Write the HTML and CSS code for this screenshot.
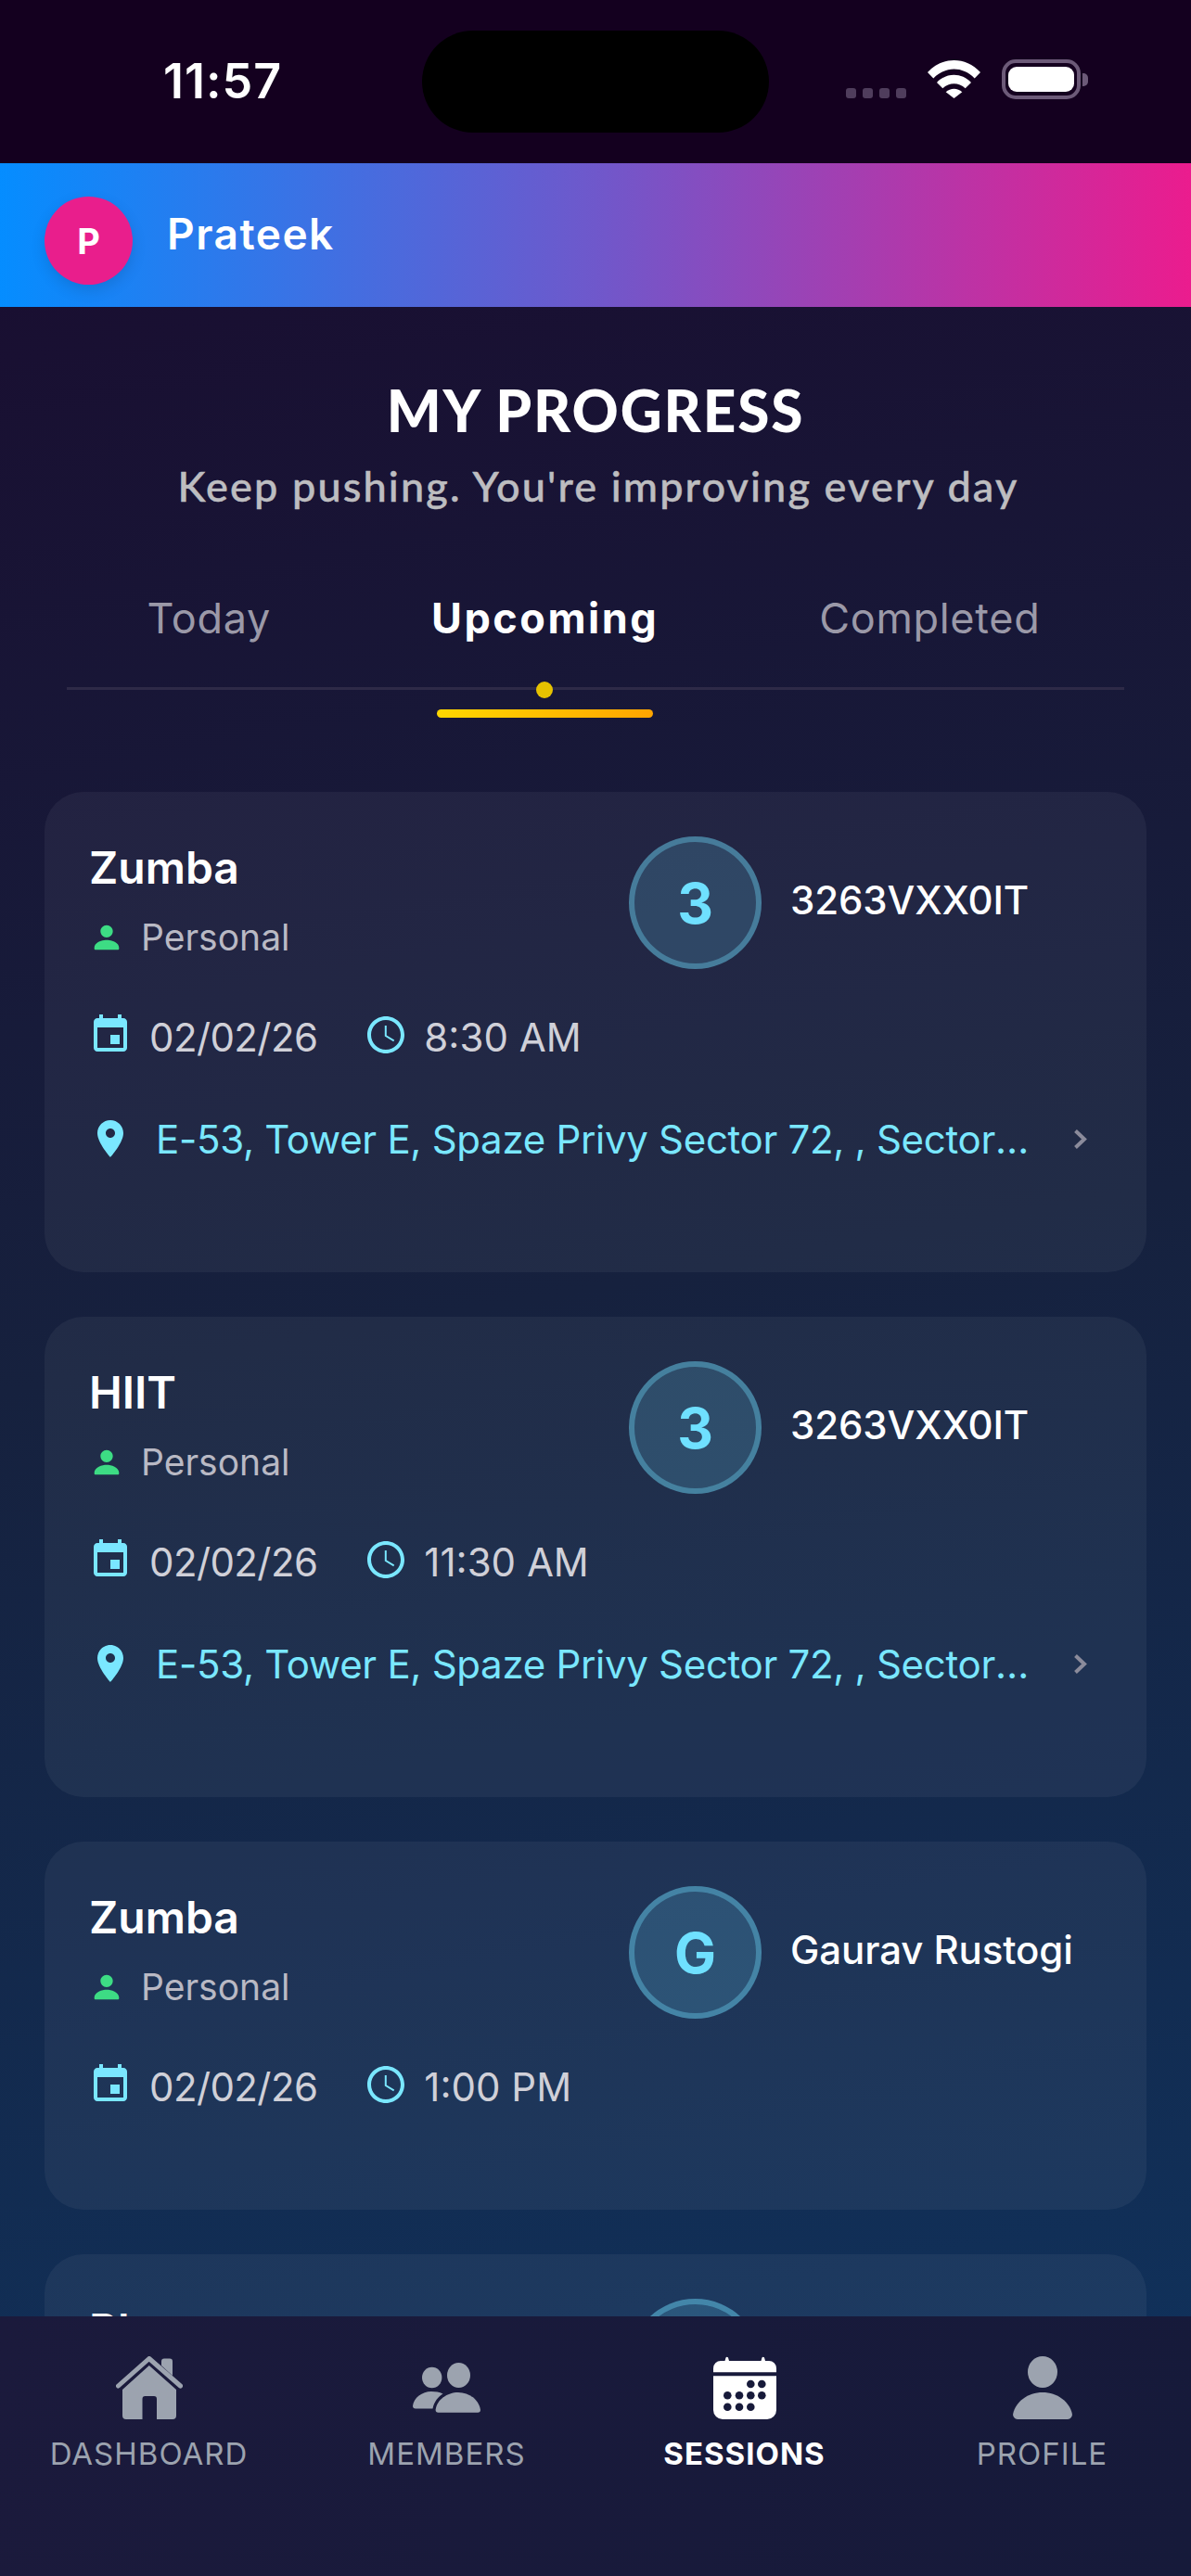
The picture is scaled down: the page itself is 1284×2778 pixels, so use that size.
FILE: index.html
```html
<!DOCTYPE html>
<html lang="en">
<head>
<meta charset="utf-8">
<title>My Progress</title>
<link rel="stylesheet" href="styles.css">
</head>
<body>
<div class="app">
  <div class="status">
    <div class="status__time">11:57</div>
    <div class="status__island"></div>
    <div class="status__icons">
      <div class="signal"><i></i><i></i><i></i><i></i></div>
      <svg class="wifi" width="57" height="41" viewBox="0 0 57 41"><path fill="#fff" d="M0 13C16-4.300 41-4.300 57 13l-6.300 6.400C37.500 6.200 19.500 6.200 6.300 19.400Z"/><path fill="#fff" d="M10 24C20 13 37 13 47 24l-6.300 6.200C33.500 23.500 23.500 23.500 16.300 30.200Z"/><path fill="#fff" d="M19.700 34.300C24.500 29.600 32.500 29.600 37.300 34.300L28.500 41Z"/></svg>
      <div class="battery"><div class="battery__fill"></div></div>
      <div class="battery__nub"></div>
    </div>
  </div>
  <header class="header">
    <div class="header__avatar">P</div>
    <div class="header__name">Prateek</div>
  </header>
  <main class="main">
    <h1 class="main__title">MY PROGRESS</h1>
    <p class="main__sub">Keep pushing. You're improving every day</p>
    <nav class="tabs">
      <div class="tab">Today</div>
      <div class="tab tab--active">Upcoming<span class="tab__dot"></span><span class="tab__bar"></span></div>
      <div class="tab">Completed</div>
    </nav>
    <section class="cards">

      <article class="card">
        <div class="card__top">
          <div class="card__left">
            <div class="card__title">Zumba</div>
            <div class="card__type">
              <svg class="ico-person" width="40" height="40" viewBox="0 0 24 24"><path fill="#3ddc84" d="M12 12c2.210 0 4-1.790 4-4s-1.790-4-4-4-4 1.790-4 4 1.790 4 4 4zm0 1.600c-2.900 0-8 1.400-8 5.200v.4c0 .5.400.8.800.8h14.400c.4 0 .8-.3.800-.8v-.4c0-3.800-5.100-5.200-8-5.200z"/></svg>
              <span>Personal</span>
            </div>
          </div>
          <div class="trainer">
            <div class="trainer__circle">3</div>
            <div class="trainer__name">3263VXX0IT</div>
          </div>
        </div>
        <div class="card__when">
          <svg class="ico" viewBox="0 0 24 24"><path d="M17 12h-5v5h5v-5zM16 1v2H8V1H6v2H5c-1.110 0-1.990.900-1.990 2L3 19c0 1.100.890 2 2 2h14c1.100 0 2-.900 2-2V5c0-1.100-.900-2-2-2h-1V1h-2zm3 18H5V8h14v11z"/></svg>
          <span class="card__date">02/02/26</span>
          <svg class="ico ico--clock" viewBox="0 0 24 24"><path d="M11.990 2C6.470 2 2 6.480 2 12s4.470 10 9.990 10C17.520 22 22 17.520 22 12S17.520 2 11.990 2zM12 20c-4.420 0-8-3.580-8-8s3.580-8 8-8 8 3.580 8 8-3.580 8-8 8z"/><path d="M12.400 7h-1v5.700l4.700 2.900.5-.8-4.200-2.600z"/></svg>
          <span class="card__time">8:30 AM</span>
        </div>
        <div class="card__where">
          <svg class="ico" viewBox="0 0 24 24"><path d="M12 2C8.130 2 5 5.130 5 9c0 5.250 7 13 7 13s7-7.750 7-13c0-3.870-3.130-7-7-7zm0 9.500c-1.380 0-2.500-1.120-2.500-2.500s1.120-2.500 2.500-2.500 2.500 1.120 2.500 2.500-1.120 2.500-2.500 2.500z"/></svg>
          <span class="card__addr">E-53, Tower E, Spaze Privy Sector 72, , Sector 72, Gurugram</span>
          <svg class="chev" width="15" height="23" viewBox="0 0 15 23"><path d="M2.500 2.500 12 11.500 2.500 20.500" fill="none" stroke="#8b8b9b" stroke-width="4"/></svg>
        </div>
      </article>

      <article class="card">
        <div class="card__top">
          <div class="card__left">
            <div class="card__title">HIIT</div>
            <div class="card__type">
              <svg class="ico-person" width="40" height="40" viewBox="0 0 24 24"><path fill="#3ddc84" d="M12 12c2.210 0 4-1.790 4-4s-1.790-4-4-4-4 1.790-4 4 1.790 4 4 4zm0 1.600c-2.900 0-8 1.400-8 5.200v.4c0 .5.400.8.800.8h14.400c.4 0 .8-.3.800-.8v-.4c0-3.800-5.100-5.200-8-5.200z"/></svg>
              <span>Personal</span>
            </div>
          </div>
          <div class="trainer">
            <div class="trainer__circle">3</div>
            <div class="trainer__name">3263VXX0IT</div>
          </div>
        </div>
        <div class="card__when">
          <svg class="ico" viewBox="0 0 24 24"><path d="M17 12h-5v5h5v-5zM16 1v2H8V1H6v2H5c-1.110 0-1.990.900-1.990 2L3 19c0 1.100.890 2 2 2h14c1.100 0 2-.900 2-2V5c0-1.100-.900-2-2-2h-1V1h-2zm3 18H5V8h14v11z"/></svg>
          <span class="card__date">02/02/26</span>
          <svg class="ico ico--clock" viewBox="0 0 24 24"><path d="M11.990 2C6.470 2 2 6.480 2 12s4.470 10 9.990 10C17.520 22 22 17.520 22 12S17.520 2 11.990 2zM12 20c-4.420 0-8-3.580-8-8s3.580-8 8-8 8 3.580 8 8-3.580 8-8 8z"/><path d="M12.400 7h-1v5.700l4.700 2.900.5-.8-4.200-2.600z"/></svg>
          <span class="card__time">11:30 AM</span>
        </div>
        <div class="card__where">
          <svg class="ico" viewBox="0 0 24 24"><path d="M12 2C8.130 2 5 5.130 5 9c0 5.250 7 13 7 13s7-7.750 7-13c0-3.870-3.130-7-7-7zm0 9.500c-1.380 0-2.500-1.120-2.500-2.500s1.120-2.500 2.500-2.500 2.500 1.120 2.500 2.500-1.120 2.500-2.500 2.500z"/></svg>
          <span class="card__addr">E-53, Tower E, Spaze Privy Sector 72, , Sector 72, Gurugram</span>
          <svg class="chev" width="15" height="23" viewBox="0 0 15 23"><path d="M2.500 2.500 12 11.500 2.500 20.500" fill="none" stroke="#8b8b9b" stroke-width="4"/></svg>
        </div>
      </article>

      <article class="card">
        <div class="card__top">
          <div class="card__left">
            <div class="card__title">Zumba</div>
            <div class="card__type">
              <svg class="ico-person" width="40" height="40" viewBox="0 0 24 24"><path fill="#3ddc84" d="M12 12c2.210 0 4-1.790 4-4s-1.790-4-4-4-4 1.790-4 4 1.790 4 4 4zm0 1.600c-2.900 0-8 1.400-8 5.200v.4c0 .5.400.8.800.8h14.400c.4 0 .8-.3.800-.8v-.4c0-3.800-5.100-5.200-8-5.200z"/></svg>
              <span>Personal</span>
            </div>
          </div>
          <div class="trainer">
            <div class="trainer__circle">G</div>
            <div class="trainer__name">Gaurav Rustogi</div>
          </div>
        </div>
        <div class="card__when">
          <svg class="ico" viewBox="0 0 24 24"><path d="M17 12h-5v5h5v-5zM16 1v2H8V1H6v2H5c-1.110 0-1.990.900-1.990 2L3 19c0 1.100.890 2 2 2h14c1.100 0 2-.900 2-2V5c0-1.100-.900-2-2-2h-1V1h-2zm3 18H5V8h14v11z"/></svg>
          <span class="card__date">02/02/26</span>
          <svg class="ico ico--clock" viewBox="0 0 24 24"><path d="M11.990 2C6.470 2 2 6.480 2 12s4.470 10 9.990 10C17.520 22 22 17.520 22 12S17.520 2 11.990 2zM12 20c-4.420 0-8-3.580-8-8s3.580-8 8-8 8 3.580 8 8-3.580 8-8 8z"/><path d="M12.400 7h-1v5.700l4.700 2.900.5-.8-4.200-2.600z"/></svg>
          <span class="card__time">1:00 PM</span>
        </div>
      </article>

      <article class="card">
        <div class="card__top">
          <div class="card__left">
            <div class="card__title">Plyo</div>
          </div>
          <div class="trainer">
            <div class="trainer__circle">G</div>
          </div>
        </div>
      </article>

    </section>
  </main>
  <footer class="tabbar">
    <div class="tabbar__item">
      <svg width="72" height="68" viewBox="0 0 72 68"><path d="M2.500 32 35.800 2.500 69.500 32" fill="none" stroke="#9ca3af" stroke-width="5" stroke-linecap="round" stroke-linejoin="round"/><path fill="#9ca3af" d="M49 5.500a3 3 0 0 1 3-3h6a3 3 0 0 1 3 3V21L49 10Z"/><path fill="#9ca3af" d="M35.800 10 65 36V64a4 4 0 0 1-4 4H44V46a3 3 0 0 0-3-3H31.500a3 3 0 0 0-3 3V68H11a4 4 0 0 1-4-4V36Z"/></svg>
      <span class="tabbar__label">DASHBOARD</span>
    </div>
    <div class="tabbar__item">
      <svg width="73" height="68" viewBox="0 0 73 68"><ellipse cx="49.500" cy="20.500" rx="12.500" ry="13.500" fill="#9ca3af"/><ellipse cx="20.700" cy="23" rx="10.700" ry="11.300" fill="#9ca3af"/><path fill="#9ca3af" d="M27.500 60.700H70a3 3 0 0 0 3-3C71 47 61 39 49 39S26 47 24.600 57.700a3 3 0 0 0 2.900 3Z"/><path fill="#9ca3af" d="M3 56.500H21.500C23 49 27.500 43.500 32.500 40.500 28.500 38.700 25 38 20 38 10 38 1 45 0 53.500A3 3 0 0 0 3 56.500Z"/></svg>
      <span class="tabbar__label">MEMBERS</span>
    </div>
    <div class="tabbar__item tabbar__item--active">
      <svg width="68" height="68" viewBox="0 0 68 68"><path fill="#fff" d="M0 17.300V13a8 8 0 0 1 8-8H12.500L13.500 1.500Q14.700 0 16 1.500L17 5H51.500L52.500 1.500Q53.700 0 55 1.500L56 5H60a8 8 0 0 1 8 8v4.300Z"/><path fill="#fff" d="M0 21.300H68V58a10 10 0 0 1-10 10H10A10 10 0 0 1 0 58Z"/><g fill="#171a3a"><circle cx="40.300" cy="30" r="4.300"/><circle cx="52.300" cy="30" r="4.300"/><circle cx="15.300" cy="42.300" r="4.300"/><circle cx="28" cy="42.300" r="4.300"/><circle cx="40.300" cy="42.300" r="4.300"/><circle cx="52.300" cy="42.300" r="4.300"/><circle cx="15.300" cy="54.700" r="4.300"/><circle cx="28" cy="54.700" r="4.300"/><circle cx="40.300" cy="54.700" r="4.300"/></g></svg>
      <span class="tabbar__label">SESSIONS</span>
    </div>
    <div class="tabbar__item">
      <svg width="64" height="68" viewBox="0 0 64 68"><ellipse cx="32" cy="17" rx="16" ry="17" fill="#9ca3af"/><path fill="#9ca3af" d="M5 68A5 5 0 0 1 .2 62C3 49 16 39 32 39S61 49 63.800 62A5 5 0 0 1 59 68Z"/></svg>
      <span class="tabbar__label">PROFILE</span>
    </div>
  </footer>
</div>
</body>
</html>
```
FILE: styles.css
```css
* { box-sizing: border-box; }
html, body { margin: 0; padding: 0; }
body { width: 1284px; height: 2778px; overflow: hidden; font-family: "Inter", "Liberation Sans", sans-serif; color: #fff; }

.app {
  width: 1284px; height: 2778px; display: flex; flex-direction: column; overflow: hidden;
  background: linear-gradient(170deg, #1a0a2e 0%, #16213e 50%, #0f3460 100%);
}

/* status bar */
.status { flex: none; height: 176px; background: #14001f; display: grid; grid-template-columns: 455px 374px 1fr; align-items: start; }
.status__time { padding: 60px 0 0 176px; font-size: 52px; line-height: 56px; font-weight: 600; letter-spacing: 1px; }
.status__island { margin-top: 33px; height: 110px; background: #000; border-radius: 55px; }
.status__icons { padding: 64px 0 0 83px; display: flex; align-items: flex-start; }
.signal { display: flex; gap: 7px; margin-top: 31px; }
.signal i { display: block; width: 11px; height: 11px; border-radius: 3px; background: #4f3d5c; }
.wifi { margin: 1px 0 0 23px; }
.battery { margin-left: 23px; width: 85px; height: 43px; border: 4px solid #6c5a78; border-radius: 15px; padding: 4px 3px; }
.battery__fill { width: 100%; height: 100%; background: #fff; border-radius: 9px; }
.battery__nub { margin: 15px 0 0 2px; width: 6px; height: 14px; background: #6c5a78; border-radius: 0 5px 5px 0; }

/* header */
.header { flex: none; height: 155px; display: flex; align-items: center; padding: 0 48px; background: linear-gradient(90deg, #058dff 0%, #6f58cb 50%, #eb1c8e 100%); }
.header__avatar { width: 95px; height: 95px; margin-top: 12px; border-radius: 50%; background: #e91e8c; display: flex; align-items: center; justify-content: center; font-size: 38px; font-weight: 700; box-shadow: 0 6px 16px rgba(0, 0, 0, .12); }
.header__name { margin: 0 0 3px 37px; font-size: 46px; line-height: 56px; font-weight: 600; letter-spacing: 1.5px; }

/* main */
.main { flex: 1; min-height: 0; overflow: hidden; padding-top: 71px; }
.main__title { margin: 0; text-align: center; font-family: "Lato", "Liberation Sans", sans-serif; font-size: 62px; line-height: 80px; font-weight: 900; letter-spacing: 1.9px; }
.main__sub { margin: 12px 0 0; padding-left: 6px; text-align: center; font-family: "Lato", "Liberation Sans", sans-serif; font-size: 45px; line-height: 60px; font-weight: 500; color: #bdbdc0; letter-spacing: 2.15px; -webkit-text-stroke: .5px #bdbdc0; }

.tabs { margin: 83px 72px 0; padding-right: 4px; height: 107px; border-bottom: 3px solid #2e2a47; display: flex; justify-content: space-around; align-items: flex-start; }
.tab { position: relative; font-size: 45px; line-height: 60px; color: #9b99a8; letter-spacing: .7px; }
.tab--active { color: #fff; font-weight: 700; letter-spacing: 2.5px; }
.tab__dot { position: absolute; left: 50%; top: 98px; width: 18px; height: 18px; margin-left: -10px; border-radius: 50%; background: #e6c200; }
.tab__bar { position: absolute; left: 50%; top: 128px; width: 233px; height: 9px; margin-left: -117px; border-radius: 5px; background: linear-gradient(90deg, #ffd700, #ffa500); }

/* cards */
.cards { margin-top: 110px; padding: 0 48px; display: flex; flex-direction: column; gap: 48px; }
.card { flex: none; padding: 48px 48px 111px; border-radius: 42px; background: rgba(255, 255, 255, .052); }
.card__top { display: flex; align-items: flex-start; }
.card__left { width: 582px; }
.card__title { font-size: 48px; line-height: 68px; font-weight: 600; }
.card__type { margin-top: 15px; display: flex; align-items: center; gap: 17px; font-size: 39px; line-height: 52px; color: #b9b9c4; }
.ico-person { flex: none; margin-left: -1px; }
.trainer { display: flex; align-items: flex-start; }
.trainer__circle { width: 143px; height: 143px; border-radius: 50%; border: 6px solid rgba(111, 223, 255, .35); background: rgba(111, 223, 255, .18); color: #6fe0ff; display: flex; align-items: center; justify-content: center; font-size: 60px; font-weight: 700; }
.trainer__name { margin: 41px 0 0 31px; font-size: 42px; line-height: 56px; font-weight: 500; letter-spacing: -.1px; }
.card__when { margin-top: 47px; height: 48px; display: flex; align-items: center; font-size: 42px; color: #d0d0d8; }
.ico { flex: none; width: 48px; height: 48px; margin-left: -1px; fill: #7ae7ff; }
.ico--clock { margin-left: 50px; }
.card__date { margin: 4px 0 0 18px; letter-spacing: -.6px; }
.card__time { margin: 4px 0 0 17px; }
.card__where { margin: 64px 0 9px; height: 48px; display: flex; align-items: center; font-size: 42px; color: #7ae7ff; }
.card__addr { margin-left: 25px; width: 944px; letter-spacing: -.3px; white-space: nowrap; overflow: hidden; text-overflow: ellipsis; }
.chev { flex: none; margin-left: 45px; }

/* tab bar */
.tabbar { flex: none; height: 280px; display: grid; grid-template-columns: repeat(4, 1fr); padding-top: 43px; background: linear-gradient(100deg, #1b1a3c, #161a3a); }
.tabbar__item { display: flex; flex-direction: column; align-items: center; }
.tabbar__label { margin-top: 17px; font-size: 33px; line-height: 40px; color: #9ca3af; letter-spacing: 1px; }
.tabbar__item--active .tabbar__label { color: #fff; font-weight: 700; }
```
